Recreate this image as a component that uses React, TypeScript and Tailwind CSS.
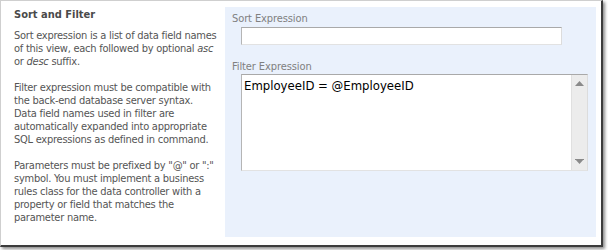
import React from "react";

const font = { fontFamily: "'DejaVu Sans', Verdana, sans-serif" };

export default function App() {
  return (
    <div className="w-[608px] h-[250px] bg-white overflow-hidden" style={font}>
      <div className="w-[603px] h-[247px] bg-white border-t border-l border-[#cfcfcf] border-r-2 border-b-2 border-r-[#3c3c3c] border-b-[#3c3c3c] shadow-[2px_2px_3px_rgba(0,0,0,0.45)] flex">
        <div className="w-[210px] pl-[13px] pt-[7px] text-[11px] leading-[13px] text-[#555] font-stretch-condensed tracking-[-0.25px] whitespace-nowrap">
          <div className="font-bold text-[#4a4a4a] mb-[8px] tracking-normal">Sort and Filter</div>
          <div>Sort expression is a list of data field names</div>
          <div>of this view, each followed by optional <i>asc</i></div>
          <div>or <i>desc</i> suffix.</div>
          <div className="h-[13px]" />
          <div>Filter expression must be compatible with</div>
          <div>the back-end database server syntax.</div>
          <div>Data field names used in filter are</div>
          <div>automatically expanded into appropriate</div>
          <div>SQL expressions as defined in command.</div>
          <div className="h-[13px]" />
          <div>Parameters must be prefixed by "@" or ":"</div>
          <div>symbol. You must implement a business</div>
          <div>rules class for the data controller with a</div>
          <div>property or field that matches the</div>
          <div>parameter name.</div>
        </div>
        <div className="ml-[14px] mt-[6px] w-[371px] h-[230px] bg-[#eaf1fc] pl-[7px] pt-[5px] flex flex-col">
          <div className="text-[11px] leading-[13px] text-[#808080] font-stretch-condensed tracking-[-0.1px]">Sort Expression</div>
          <div className="ml-[9px] mt-[2px] w-[321px] h-[18px] bg-white border border-t-[#a9a9a9] border-l-[#b5b5b5] border-r-[#dcdcdc] border-b-[#e2e2e2]" />
          <div className="mt-[15px] text-[11px] leading-[13px] text-[#808080] font-stretch-condensed tracking-[-0.1px]">Filter Expression</div>
          <div className="ml-[9px] mt-[1px] w-[347px] h-[97px] bg-white border border-t-[#a9a9a9] border-l-[#b5b5b5] border-r-[#dcdcdc] border-b-[#e2e2e2] flex">
            <div className="flex-1 pl-[2px] pt-[3px] text-[13px] leading-[16px] text-black font-stretch-condensed">EmployeeID = @EmployeeID</div>
            <div className="w-[16px] bg-[#ececec] border-l border-[#e0e0e0] flex flex-col justify-between items-center py-[6px]">
              <svg width="9" height="5" viewBox="0 0 9 5"><path d="M4.5 0 L9 5 L0 5 Z" fill="#8a8a8a" /></svg>
              <svg width="9" height="5" viewBox="0 0 9 5"><path d="M0 0 L9 0 L4.5 5 Z" fill="#8a8a8a" /><path d="M0 0 H9 V1 H0 Z" fill="#8a8a8a" /></svg>
            </div>
          </div>
        </div>
      </div>
    </div>
  );
}
